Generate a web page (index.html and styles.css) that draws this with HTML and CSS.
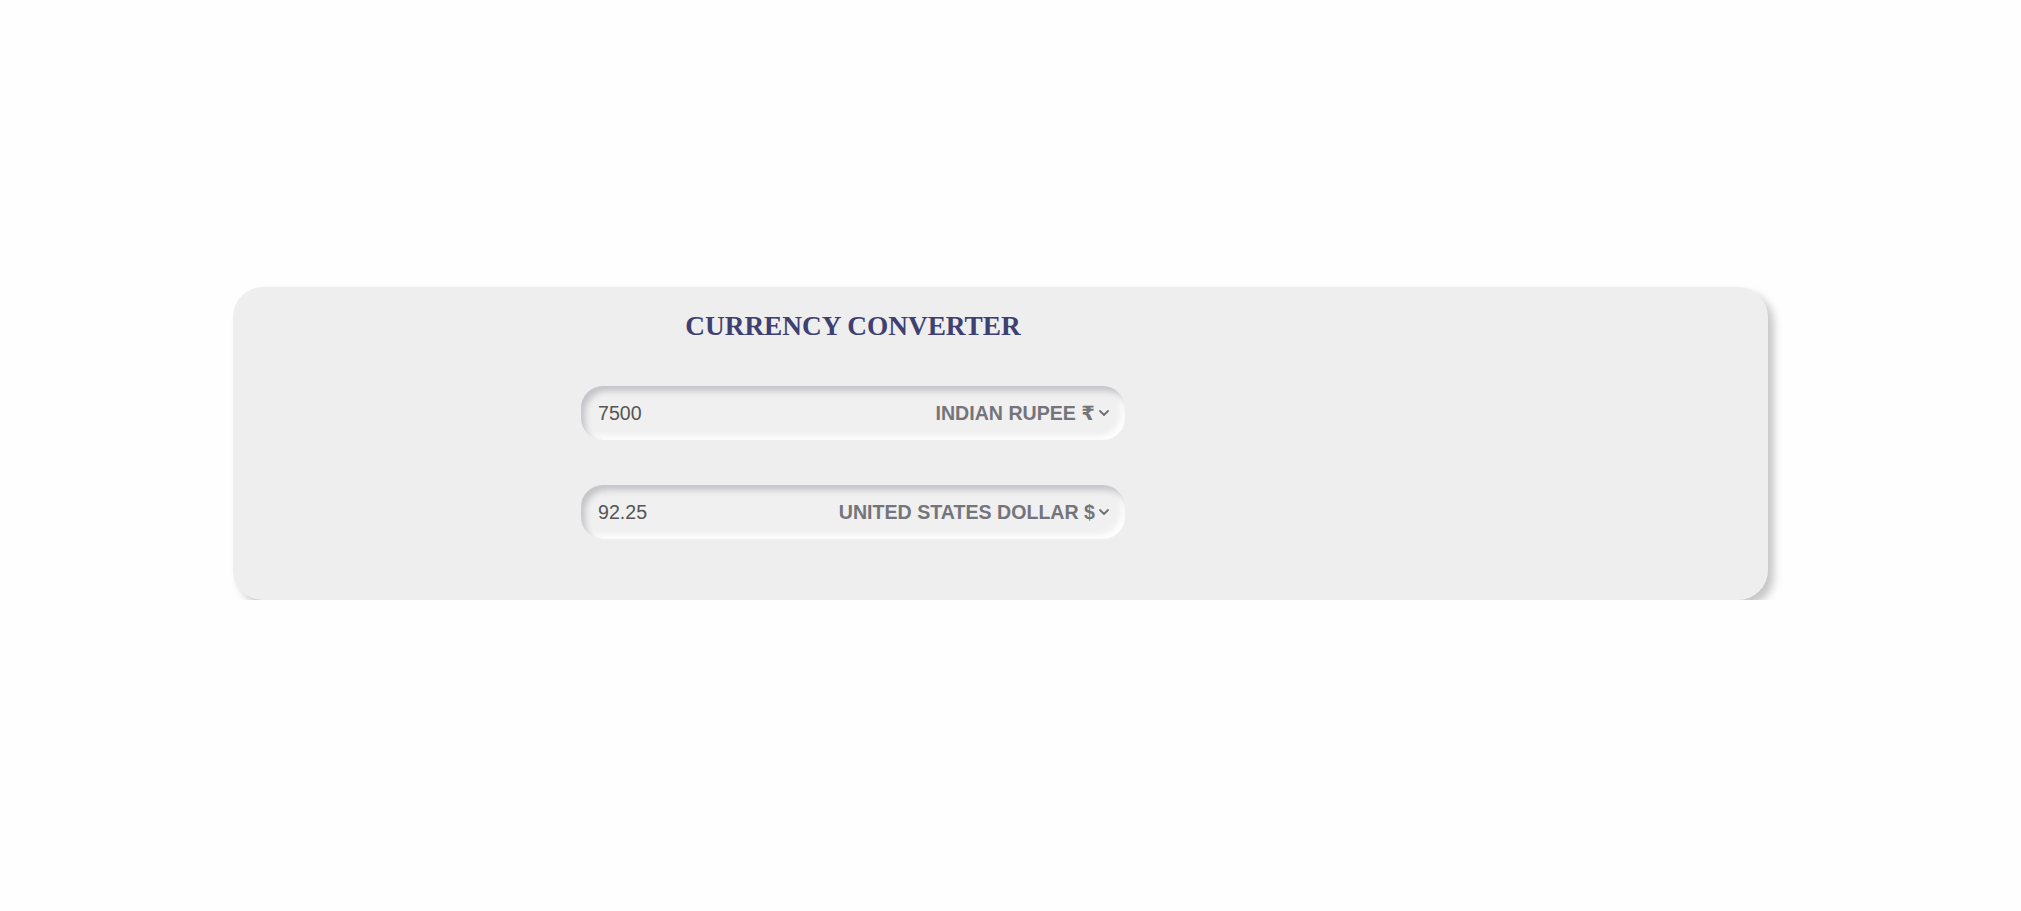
FILE: index.html
```html
<!DOCTYPE html>
<html lang="en">
<head>
<meta charset="utf-8">
<title>Currency Converter</title>
<link rel="stylesheet" href="styles.css">
</head>
<body>
<main class="page">
  <section class="card">
    <form class="converter">
      <h1 class="title">CURRENCY CONVERTER</h1>
      <div class="field">
        <input class="amount" type="text" value="7500">
        <div class="currency">
          <select class="currency-select">
            <option selected>INDIAN RUPEE ₹</option>
            <option>EURO €</option>
            <option>JAPANESE YEN ¥</option>
          </select>
          <svg class="chev" width="10" height="6" viewBox="0 0 10 6"><polyline points="1,1 5,5 9,1" fill="none" stroke="#6f6f76" stroke-width="1.8" stroke-linecap="round" stroke-linejoin="round"/></svg>
        </div>
      </div>
      <div class="field">
        <input class="amount" type="text" value="92.25">
        <div class="currency">
          <select class="currency-select">
            <option selected>UNITED STATES DOLLAR $</option>
            <option>EURO €</option>
            <option>JAPANESE YEN ¥</option>
          </select>
          <svg class="chev" width="10" height="6" viewBox="0 0 10 6"><polyline points="1,1 5,5 9,1" fill="none" stroke="#6f6f76" stroke-width="1.8" stroke-linecap="round" stroke-linejoin="round"/></svg>
        </div>
      </div>
    </form>
  </section>
</main>
</body>
</html>
```
FILE: styles.css
```css
html, body {
  margin: 0;
  padding: 0;
  background: #fefefe;
}

.page {
  padding-top: 287px;
  padding-left: 233px;
}

.card {
  box-sizing: border-box;
  width: 1535px;
  height: 313px;
  background: #eeeeee;
  border-radius: 30px;
  box-shadow: 6px 6px 8px rgba(0, 0, 0, 0.22);
  padding: 23px 0 0 348px;
}

.converter {
  width: 544px;
  display: flex;
  flex-direction: column;
  gap: 45px;
}

.title {
  margin: 0 0 -1px;
  font-family: "Liberation Serif", "Times New Roman", serif;
  font-weight: bold;
  font-size: 27.3px;
  line-height: 32px;
  color: #3d4070;
  text-align: center;
}

.field {
  box-sizing: border-box;
  height: 54px;
  display: flex;
  align-items: center;
  padding: 0 16px 0 17px;
  border-radius: 22px;
  background: #f0f0f0;
  box-shadow: inset 4px 5px 6px #c3c3c8, inset -4px -4px 6px #ffffff;
}

.amount {
  width: 160px;
  border: 0;
  padding: 0;
  margin: 0;
  background: transparent;
  outline: none;
  font-family: "Liberation Sans", Arial, sans-serif;
  font-size: 19.6px;
  color: #555555;
}

.currency {
  flex: 1;
  display: flex;
  align-items: center;
}

.currency-select {
  flex: 1;
  appearance: none;
  -webkit-appearance: none;
  border: 0;
  padding: 0;
  margin: 0;
  background: transparent;
  outline: none;
  font-family: "Liberation Sans", Arial, "DejaVu Sans", sans-serif;
  font-weight: bold;
  font-size: 19.6px;
  color: #74747b;
  text-align-last: right;
}

.chev {
  flex: none;
  margin-left: 4px;
}
```
